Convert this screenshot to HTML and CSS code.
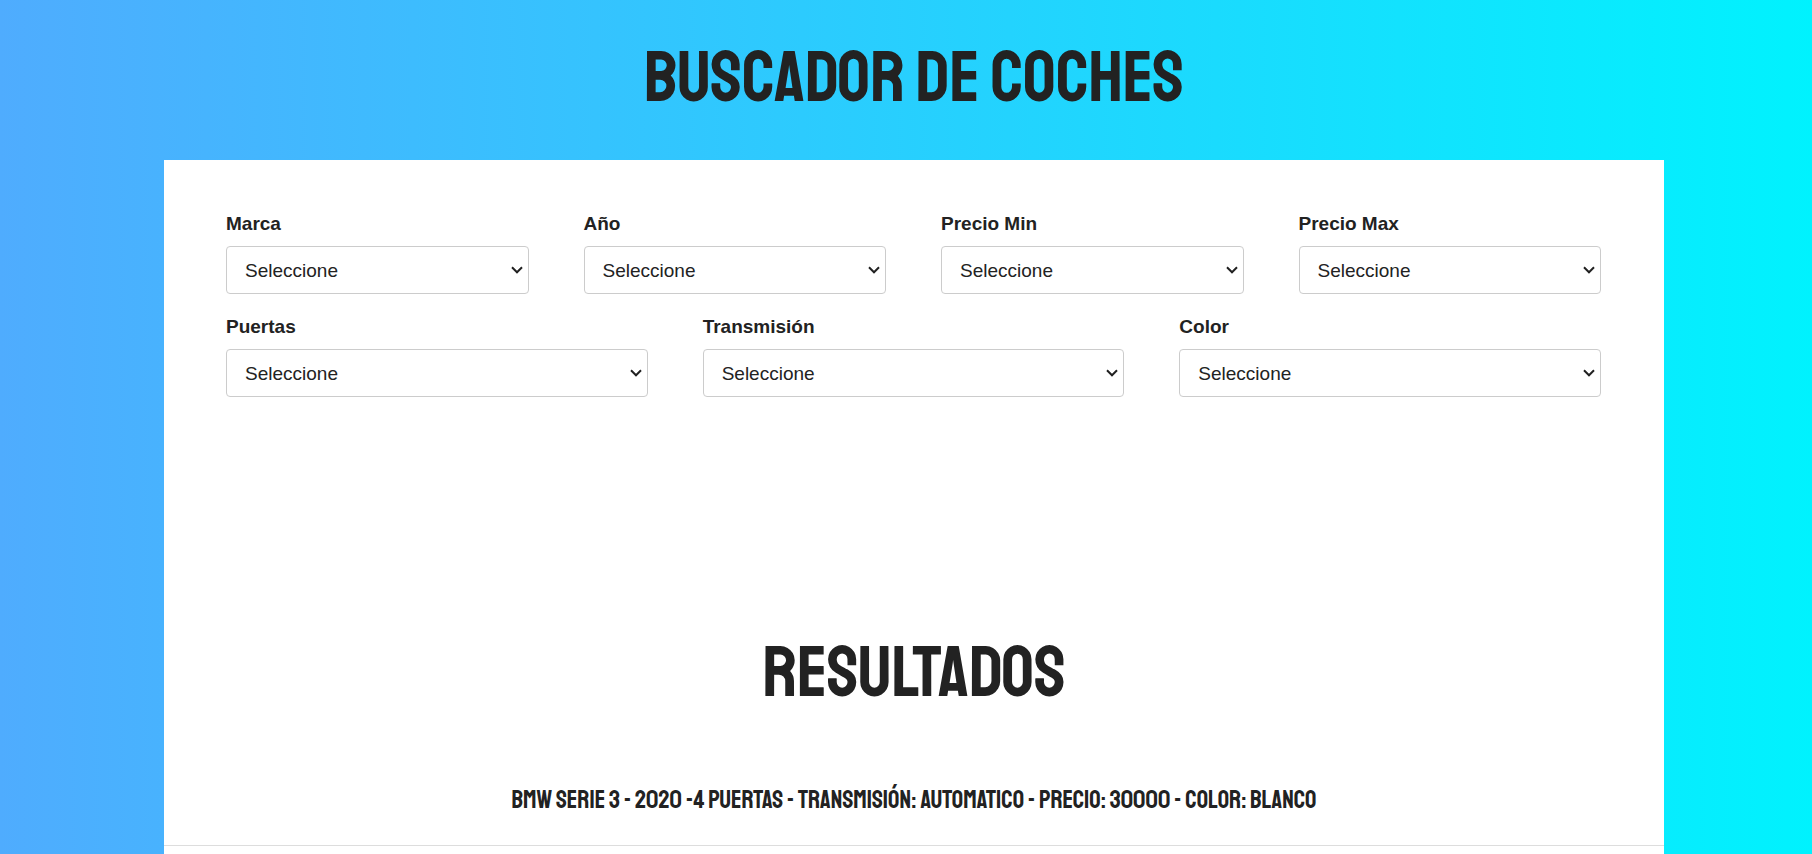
FILE: index.html
```html
<!DOCTYPE html>
<html lang="es">
<head>
<meta charset="utf-8">
<title>Buscador de coches</title>
<link rel="stylesheet" href="styles.css">
</head>
<body>
<header class="masthead"><h1 class="heading">BUSCADOR DE COCHES</h1></header>
<main class="panel">
  <form class="search">
    <div class="row row-four">
      <div class="field"><label for="marca">Marca</label><select id="marca"><option>Seleccione</option></select></div>
      <div class="field"><label for="year">Año</label><select id="year"><option>Seleccione</option></select></div>
      <div class="field"><label for="minimo">Precio Min</label><select id="minimo"><option>Seleccione</option></select></div>
      <div class="field"><label for="maximo">Precio Max</label><select id="maximo"><option>Seleccione</option></select></div>
    </div>
    <div class="row row-three">
      <div class="field"><label for="puertas">Puertas</label><select id="puertas"><option>Seleccione</option></select></div>
      <div class="field"><label for="transmision">Transmisión</label><select id="transmision"><option>Seleccione</option></select></div>
      <div class="field"><label for="color">Color</label><select id="color"><option>Seleccione</option></select></div>
    </div>
  </form>
  <section class="results">
    <h2 class="heading">RESULTADOS</h2>
    <p class="car">BMW SERIE 3 - 2020 -4 PUERTAS - TRANSMISIÓN: AUTOMATICO - PRECIO: 30000 - COLOR: BLANCO</p>
  </section>
</main>
</body>
</html>
```
FILE: styles.css
```css
* { box-sizing: border-box; }
html { background: linear-gradient(to right, #4facfe 0%, #00f2fe 100%); min-height: 100%; }
body {
  margin: 0;
  padding-left: 16px;
  color: #222;
  font-family: "Liberation Sans", Arial, sans-serif;
  font-size: 19px;
}
.heading, .car {
  margin: 0;
  text-align: center;
  font-family: Staatliches, "Liberation Sans Narrow", "DejaVu Sans Condensed", sans-serif;
  font-weight: 400;
}
.heading { font-size: 72px; line-height: 80px; }
.masthead { padding: 38px 0 42px; }
.panel { max-width: 1500px; margin: 0 auto; padding-bottom: 24px; background: #fff; }
.search { padding: 50px 63px 0 62px; }
.row { display: grid; column-gap: 4%; margin-bottom: 19px; }
.row-four { grid-template-columns: repeat(4, 1fr); }
.row-three { grid-template-columns: repeat(3, 1fr); }
.field { display: flex; flex-direction: column; gap: 8px; }
.field label { font-weight: 700; line-height: 28px; }
.field select {
  appearance: none;
  width: 100%;
  height: 48px;
  padding: 0 24px 0 18px;
  border: 1px solid #ccc;
  border-radius: 4px;
  background: #fff url("data:image/svg+xml,%3Csvg xmlns='http://www.w3.org/2000/svg' width='12' height='8' viewBox='0 0 12 8'%3E%3Cpath d='M1 1.3 6 6.3 11 1.3' fill='none' stroke='%23222' stroke-width='2'/%3E%3C/svg%3E") no-repeat right 5px center;
  color: #222;
  font-family: inherit;
  font-size: 19px;
}
.results { padding-top: 217px; }
.car {
  padding: 73px 0 31px;
  border-bottom: 1px solid #ddd;
  font-size: 25px;
  line-height: 28px;
}
```
